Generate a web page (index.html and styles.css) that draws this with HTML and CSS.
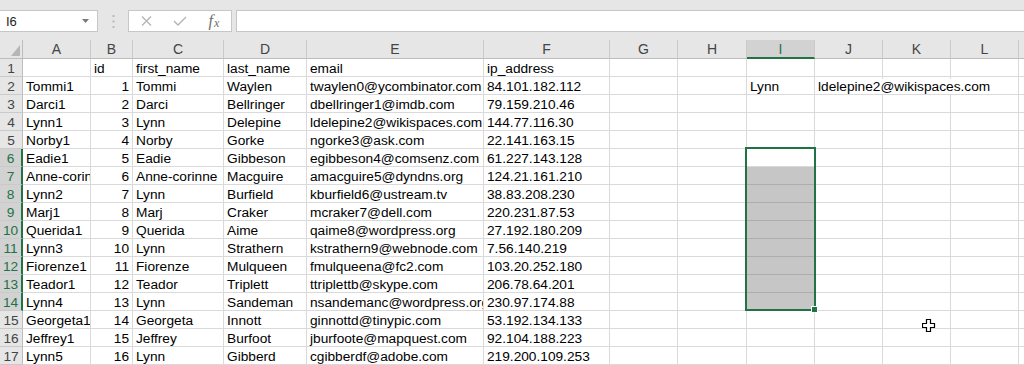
FILE: index.html
```html
<!DOCTYPE html>
<html lang="en">
<head>
<meta charset="UTF-8" />
<meta name="viewport" content="width=device-width, initial-scale=1" />
<title>Book1 - Excel</title>
<link rel="stylesheet" href="styles.css">
</head>
<body>
  <div class="formula-bar">
    <div class="name-box">
      <span>I6</span>
      <svg class="caret" width="7" height="4" viewBox="0 0 7 4"><path d="M0 0h7L3.5 4z" fill="#7a7a7a"/></svg>
    </div>
    <svg class="grip" width="3" height="13" viewBox="0 0 3 13">
      <rect x="0.5" y="0" width="2" height="2" fill="#b9b9b9"/>
      <rect x="0.5" y="5.5" width="2" height="2" fill="#b9b9b9"/>
      <rect x="0.5" y="11" width="2" height="2" fill="#b9b9b9"/>
    </svg>
    <div class="fx-buttons">
      <span class="fx-btn">
        <svg width="11" height="10" viewBox="0 0 11 10"><path d="M1 0.5l9 9M10 0.5l-9 9" stroke="#b4b4b4" stroke-width="1.3" fill="none"/></svg>
      </span>
      <span class="fx-btn">
        <svg width="14" height="10" viewBox="0 0 14 10"><path d="M1 5l4 4L13 1" stroke="#b4b4b4" stroke-width="1.4" fill="none"/></svg>
      </span>
      <span class="fx-btn fx-label"><i>f</i><i class="x">x</i></span>
    </div>
    <div class="formula-input"></div>
  </div>

  <div class="sheet" id="sheet">
    <div class="selection"><span class="fill-handle"></span></div>
    <svg class="cursor" width="14" height="14" viewBox="0 0 14 14">
      <path d="M4.5 0.5h4v4h4v4h-4v4h-4v-4h-4v-4h4z" fill="#fff" stroke="#000" stroke-width="1.2"/>
    </svg>
  </div>

<script>
  (function(){
    const sheet = document.getElementById('sheet');
    // last column only shows its left edge, so no label
    const letters = ['A','B','C','D','E','F','G','H','I','J','K','L',''];

    // sheet contents, row 1 first
    const rows = [
      ['', 'id', 'first_name', 'last_name', 'email', 'ip_address'],
      ['Tommi1', 1, 'Tommi', 'Waylen', 'twaylen0@ycombinator.com', '84.101.182.112', '', '', 'Lynn', 'ldelepine2@wikispaces.com'],
      ['Darci1', 2, 'Darci', 'Bellringer', 'dbellringer1@imdb.com', '79.159.210.46'],
      ['Lynn1', 3, 'Lynn', 'Delepine', 'ldelepine2@wikispaces.com', '144.77.116.30'],
      ['Norby1', 4, 'Norby', 'Gorke', 'ngorke3@ask.com', '22.141.163.15'],
      ['Eadie1', 5, 'Eadie', 'Gibbeson', 'egibbeson4@comsenz.com', '61.227.143.128'],
      ['Anne-corinne1', 6, 'Anne-corinne', 'Macguire', 'amacguire5@dyndns.org', '124.21.161.210'],
      ['Lynn2', 7, 'Lynn', 'Burfield', 'kburfield6@ustream.tv', '38.83.208.230'],
      ['Marj1', 8, 'Marj', 'Craker', 'mcraker7@dell.com', '220.231.87.53'],
      ['Querida1', 9, 'Querida', 'Aime', 'qaime8@wordpress.org', '27.192.180.209'],
      ['Lynn3', 10, 'Lynn', 'Strathern', 'kstrathern9@webnode.com', '7.56.140.219'],
      ['Fiorenze1', 11, 'Fiorenze', 'Mulqueen', 'fmulqueena@fc2.com', '103.20.252.180'],
      ['Teador1', 12, 'Teador', 'Triplett', 'ttriplettb@skype.com', '206.78.64.201'],
      ['Lynn4', 13, 'Lynn', 'Sandeman', 'nsandemanc@wordpress.org', '230.97.174.88'],
      ['Georgeta1', 14, 'Georgeta', 'Innott', 'ginnottd@tinypic.com', '53.192.134.133'],
      ['Jeffrey1', 15, 'Jeffrey', 'Burfoot', 'jburfoote@mapquest.com', '92.104.188.223'],
      ['Lynn5', 16, 'Lynn', 'Gibberd', 'cgibberdf@adobe.com', '219.200.109.253']
    ];

    // selected range I6:I14
    const selCol = 8, selFirst = 6, selLast = 14;

    function cell(className, text) {
      const div = document.createElement('div');
      div.className = className;
      if (text !== undefined && text !== '') div.textContent = text;
      sheet.appendChild(div);
      return div;
    }

    // header row
    const corner = cell('hdr corner');
    corner.innerHTML = '<svg width="9" height="11" viewBox="0 0 9 11"><path d="M9 0v11H0z" fill="#b6b6b6"/></svg>';
    letters.forEach((l, i) => {
      cell('hdr col-hdr' + (i === selCol ? ' sel-col' : ''), l);
    });

    rows.forEach((row, r) => {
      const n = r + 1;
      const inSel = n >= selFirst && n <= selLast;
      cell('hdr row-hdr' + (inSel ? ' sel-row' : ''), n);

      letters.forEach((l, c) => {
        const val = row[c];
        let cls = 'cell';
        if (typeof val === 'number') cls += ' num';
        if (c === selCol && inSel && n !== selFirst) cls += ' in-range';
        const div = cell(cls);
        if (val === undefined || val === '') return;
        // text spills into the empty cells on its right
        if (c === 9 && n === 2) {
          div.classList.add('spill');
          const span = document.createElement('span');
          span.textContent = val;
          div.appendChild(span);
        } else {
          div.textContent = val;
        }
      });
    });
  })();
</script>
</body>
</html>
```

FILE: styles.css
```css
*, *::before, *::after {
  box-sizing: border-box;
}
body {
  margin: 0;
  font-family: 'Liberation Sans', Arial, sans-serif;
  background: #fff;
  color: #000;
  width: 1024px;
  height: 365px;
  overflow: hidden;
}

/* Formula bar */
.formula-bar {
  height: 40px;
  background: #e6e6e6;
  display: flex;
  align-items: flex-start;
  padding-top: 10px;
}
.name-box {
  width: 98px;
  height: 22px;
  background: #fff;
  border: 1px solid #c6c6c6;
  border-left: none;
  display: flex;
  align-items: center;
  justify-content: space-between;
  padding: 0 8px 0 6px;
  font-size: 13px;
  color: #222;
}
.grip {
  margin: 5px 0 0 14px;
}
.fx-buttons {
  margin-left: 13px;
  width: 104px;
  height: 22px;
  background: #fff;
  border: 1px solid #c6c6c6;
  display: flex;
  align-items: center;
}
.fx-btn {
  width: 34px;
  display: flex;
  justify-content: center;
  align-items: center;
}
.fx-label {
  font-family: 'Liberation Serif', 'Times New Roman', serif;
  font-size: 16px;
  color: #6d6d6d;
  line-height: 1;
}
.fx-label .x {
  font-size: 12px;
  margin-left: 1px;
  margin-top: 4px;
}
.formula-input {
  flex: 1;
  margin-left: 4px;
  height: 22px;
  background: #fff;
  border: 1px solid #c6c6c6;
  border-right: none;
}

/* Grid */
.sheet {
  position: relative;
  display: grid;
  grid-template-columns: 23px 68px 42px 91px 83px 177px 126px 68px 69px 68px 68px 68px 68px 68px;
  grid-template-rows: 19px repeat(17, 18px);
  width: 1087px;
  background: #fff;
}
.cell {
  border-right: 1px solid #dadada;
  border-bottom: 1px solid #dadada;
  padding: 2px 3px 0;
  font-size: 13.7px;
  line-height: 16px;
  white-space: nowrap;
  overflow: hidden;
}
.cell.num {
  text-align: right;
  padding-right: 3px;
}
.cell.in-range {
  background: #c6c6c6;
  border-bottom-color: #adadad;
}
.cell.spill {
  overflow: visible;
  z-index: 1;
}
.cell.spill span {
  background: #fff;
}

.hdr {
  background: #e6e6e6;
  color: #444;
  text-align: center;
  border-right: 1px solid #cacaca;
  border-bottom: 1px solid #cacaca;
  font-size: 14px;
  white-space: nowrap;
  overflow: hidden;
}
.col-hdr {
  line-height: 18px;
  border-bottom-color: #bdbdbd;
}
.row-hdr {
  font-size: 13.7px;
  padding-top: 2px;
  line-height: 16px;
  border-right-color: #bdbdbd;
}
.corner {
  display: flex;
  align-items: flex-end;
  justify-content: flex-end;
  padding: 0 2px 2px 0;
  border-bottom-color: #bdbdbd;
  border-right-color: #bdbdbd;
}
.corner svg {
  display: block;
}
.col-hdr.sel-col {
  background: #d2d2d2;
  color: #217346;
  border-bottom: 2px solid #217346;
}
.row-hdr.sel-row {
  background: #d2d2d2;
  color: #217346;
  border-right: 2px solid #217346;
}

/* Selection outline over I6:I14 */
.selection {
  position: absolute;
  left: 745px;
  top: 107px;
  width: 71px;
  height: 164px;
  border: 2px solid #217346;
  pointer-events: none;
  z-index: 2;
}
.fill-handle {
  position: absolute;
  right: -4px;
  bottom: -4px;
  width: 7px;
  height: 7px;
  background: #217346;
  border: 1px solid #fff;
}
.cursor {
  position: absolute;
  left: 922px;
  top: 279px;
  z-index: 3;
}
```
